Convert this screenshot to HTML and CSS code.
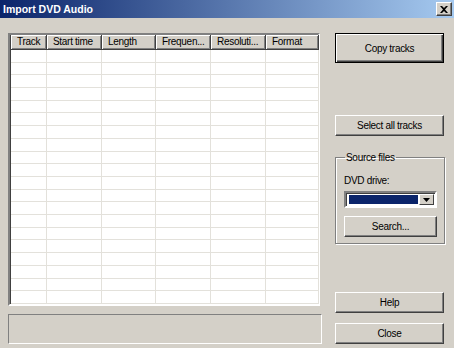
FILE: index.html
```html
<!DOCTYPE html>
<html lang="en">
<head>
    <meta charset="UTF-8">
    <title>Import DVD Audio</title>
    <link rel="stylesheet" href="styles.css">
</head>
<body>

    <div class="window">
        <div class="titlebar">
            <span class="title">Import DVD Audio</span>
            <button class="close-btn">
                <svg width="8" height="7" viewBox="0 0 8 7"><path d="M0 0h2l2 2 2-2h2L5 3.5 8 7H6L4 5 2 7H0l3-3.5z" fill="#000"/></svg>
            </button>
        </div>

        <div class="content">
            <div class="main">
                <div class="list">
                    <div class="list-head">
                        <div class="col">Track</div>
                        <div class="col">Start time</div>
                        <div class="col">Length</div>
                        <div class="col">Frequen...</div>
                        <div class="col">Resoluti...</div>
                        <div class="col">Format</div>
                    </div>
                    <div class="list-rows" id="rows">
                        <!-- rows are added by the script below -->
                    </div>
                </div>
                <div class="status"></div>
            </div>

            <div class="side">
                <button class="btn btn-default copy">Copy tracks</button>
                <button class="btn select-all">Select all tracks</button>

                <fieldset class="group">
                    <legend>Source files</legend>
                    <p class="label">DVD drive:</p>
                    <div class="combo">
                        <div class="combo-value"></div>
                        <div class="combo-arrow">
                            <svg width="7" height="4" viewBox="0 0 7 4"><path d="M0 0h7L3.5 4z" fill="#000"/></svg>
                        </div>
                    </div>
                    <button class="btn search">Search...</button>
                </fieldset>

                <button class="btn help">Help</button>
                <button class="btn close">Close</button>
            </div>
        </div>
    </div>

    <script>
        let rows = document.getElementById("rows");
        for (let i = 0; i < 20; i++) {
            let row = document.createElement("div");
            row.classList.add("row");
            for (let c = 0; c < 6; c++) {
                row.appendChild(document.createElement("div"));
            }
            rows.appendChild(row);
        }
    </script>

</body>
</html>
```

FILE: styles.css
```css
* {
    margin: 0;
    padding: 0;
    box-sizing: border-box;
    font-family: "Liberation Sans", Arial, sans-serif;
}

body {
    background-color: #D4D0C8;
    color: #000;
    font-size: 10px;
    letter-spacing: -0.3px;
    width: 454px;
    height: 348px;
    overflow: hidden;
}

.window {
    display: flex;
    flex-direction: column;
    height: 100%;
}

.titlebar {
    height: 18px;
    background: linear-gradient(90deg, #0A246A, #A6CAF0);
    display: flex;
    align-items: center;
    justify-content: space-between;
    padding: 0 2px 0 3px;
}

.title {
    color: white;
    font-weight: bold;
    font-size: 10.5px;
    letter-spacing: 0;
}

.close-btn {
    width: 16px;
    height: 14px;
    background: #D4D0C8;
    border: 1px solid;
    border-color: #fff #404040 #404040 #fff;
    box-shadow: inset -1px -1px 0 #808080;
    display: flex;
    justify-content: center;
    align-items: center;
}

.content {
    flex-grow: 1;
    display: flex;
    padding: 15px 0 4px 8px;
}

.main {
    width: 314px;
    display: flex;
    flex-direction: column;
}

.list {
    width: 312px;
    height: 273px;
    background: white;
    border: 2px solid;
    border-color: #808080 #fff #fff #808080;
    box-shadow: inset 1px 1px 0 #404040;
    display: flex;
    flex-direction: column;
}

.list-head, .row {
    display: grid;
    grid-template-columns: 36px 55px 54px 55px 55px 53px;
}

.list-head {
    height: 15px;
    margin-left: 1px;
}

.col {
    background: #D4D0C8;
    border-right: 1px solid #404040;
    border-bottom: 1px solid #404040;
    box-shadow: inset 1px 1px 0 #fff, inset -1px -1px 0 #808080;
    padding-left: 6px;
    line-height: 14px;
    white-space: nowrap;
    overflow: hidden;
}

.list-rows {
    flex-grow: 1;
    display: grid;
    grid-template-rows: repeat(20, 1fr);
    margin-left: 1px;
}

.row div {
    border-right: 1px solid #E3E1DB;
    border-bottom: 1px solid #E3E1DB;
}

.status {
    margin-top: 8px;
    height: 30px;
    border: 1px solid;
    border-color: #808080 #fff #fff #808080;
}

.side {
    width: 109px;
    margin-left: 13px;
    display: flex;
    flex-direction: column;
}

.btn {
    background: #D4D0C8;
    font-size: 10px;
    letter-spacing: -0.3px;
    border: 1px solid;
    border-color: #fff #404040 #404040 #fff;
    box-shadow: inset -1px -1px 0 #808080;
    height: 21px;
}

.btn-default {
    border: 1px solid #000;
    box-shadow: inset 1px 1px 0 #fff, inset -1px -1px 0 #404040, inset -2px -2px 0 #808080;
}

.copy {
    height: 30px;
}

.select-all {
    margin-top: 52px;
}

.group {
    margin-top: 16px;
    height: 92px;
    border: 1px solid #808080;
    box-shadow: 1px 1px 0 #fff, inset 1px 1px 0 #fff;
    padding: 4px 7px 0 8px;
}

.group legend {
    padding: 0 1px;
    margin-left: 1px;
}

.label {
    margin-top: 7px;
    line-height: 13px;
}

.combo {
    margin-top: 4px;
    height: 17px;
    width: 93px;
    border: 2px solid;
    border-color: #808080 #fff #fff #808080;
    box-shadow: inset 1px 1px 0 #404040;
    background: white;
    display: flex;
    padding: 1px;
}

.combo-value {
    flex-grow: 1;
    background: #0A246A;
    margin: 1px 1px 1px 2px;
}

.combo-arrow {
    width: 15px;
    background: #D4D0C8;
    border: 1px solid;
    border-color: #fff #404040 #404040 #fff;
    display: flex;
    justify-content: center;
    align-items: center;
}

.search {
    margin-top: 8px;
    width: 93px;
}

.help {
    margin-top: auto;
}

.close {
    margin-top: 10px;
}
```
